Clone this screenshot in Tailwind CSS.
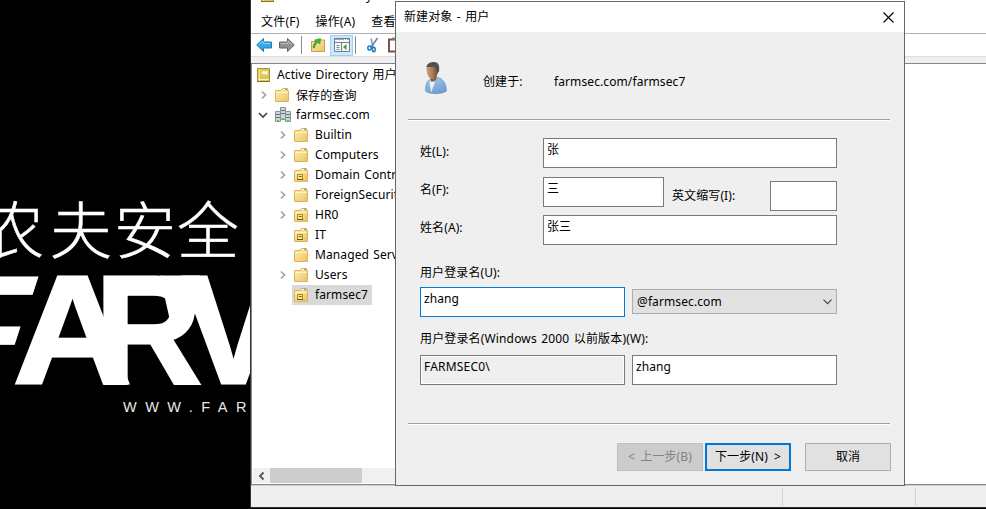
<!DOCTYPE html>
<html lang="zh-CN">
<head>
<meta charset="utf-8">
<title>新建对象 - 用户</title>
<script src="https://cdn.jsdelivr.net/npm/@tailwindcss/browser@4"></script>
</head>
<body class="w-[986px] h-[509px] overflow-hidden bg-black text-black text-[12px] leading-[20px] tracking-[0.1px] font-['Noto_Sans','Noto_Sans_CJK_SC',sans-serif] whitespace-nowrap">
<svg class="absolute" width="0" height="0">
  <defs><linearGradient id="gold" x1="0" y1="0" x2="1" y2="1"><stop offset="0" stop-color="#fff0b0"/><stop offset="1" stop-color="#ecc266"/></linearGradient></defs>
  <symbol id="folder" viewBox="0 0 16 16">
    <path d="M1.500 3.500H7L8.500 1.500H13.500V3.500H14.500V14.500H1.500Z" fill="url(#gold)" stroke="#dcb25c"/>
    <path d="M9 2.500H13" stroke="#fff"/><path d="M11 2.500h2" stroke="#5a9bd0"/>
    <path d="M2 5.500H14" stroke="#fff3c4"/>
  </symbol>
  <symbol id="ou" viewBox="0 0 16 16">
    <use href="#folder"/>
    <path d="M4.500 7.500h5v5h-5z" fill="#fbe38a" stroke="#a48a33"/><path d="M6 9.500h2.500M4 12.500h6" stroke="#6e5914"/>
  </symbol>
  <symbol id="chev" viewBox="0 0 8 10"><path d="M2 1.500L5.500 5L2 8.500" fill="none" stroke="#a3a3a3" stroke-width="1.700"/></symbol>
  <symbol id="book" viewBox="0 0 14 16">
    <path d="M.500 1.500H12.500V14.500H.500Z" fill="#dec65a" stroke="#ab9136"/><path d="M2.500 2V14" stroke="#f5e59a"/><path d="M5 4.500h5.500v2.500h-5.500z" fill="#fffbe6" stroke="#f5e9b0"/><path d="M1 12.500h11" stroke="#fff3bd"/><path d="M0 14.500h13" stroke="#8a701a"/>
  </symbol>
</svg>

<div class="relative flex w-[986px] h-[509px]">
  <!-- Desktop wallpaper -->
  <div class="w-[250px] h-full shrink-0 overflow-hidden">
    <svg width="250" height="509" viewBox="0 0 250 509" fill="#fff" letter-spacing="0">
      <g font-family="Noto Sans CJK SC, sans-serif" font-size="62" font-weight="300" stroke="#fff" stroke-width="0.500">
        <text x="-18" y="254">农</text><text x="50" y="254">夫</text><text x="114" y="254">安</text><text x="177" y="254">全</text>
      </g>
      <g font-family="Liberation Sans, sans-serif" font-weight="700" font-size="154" stroke="#fff" stroke-width="3">
        <text transform="translate(-85 382.500) skewX(-18)" stroke-width="1">F</text>
        <text transform="translate(13 382.500) scale(1.070 1)">A</text>
        <text transform="translate(95 382.500) scale(.960 1)">R</text>
        <text transform="translate(182 382.500)">V</text>
      </g>
      <path d="M160 275.500H200L197 308Q190 326 172 330Z"/>
      <text x="123" y="412" font-family="Liberation Sans, sans-serif" font-size="14.500" letter-spacing="8.500" fill="#e8e8e8">WWW.FAR</text>
    </svg>
  </div>

  <!-- Directory console -->
  <div class="flex flex-col w-[736px] h-[508px] border-l border-b border-[#333238] bg-white overflow-hidden">
    <div class="h-[11px] shrink-0 flex overflow-hidden">
      <svg class="-mt-[13px] ml-[10px]" width="14" height="16"><use href="#book"/></svg>
      <span class="-mt-[14px] ml-[7px]">Active Directory</span>
    </div>
    <div class="h-[22px] shrink-0 flex pl-[10px] gap-[16px] leading-[22px] tracking-[0.2px]"><span>文件(F)</span><span>操作(A)</span><span>查看</span></div>
    <div class="h-[24px] shrink-0 flex items-center border-t border-b border-t-[#b0afb5] border-b-[#dcdcdc] pl-[5px]">
      <svg width="16" height="16"><path d="M.700 8L7.500 1.500V5H15.500V11H7.500V14.500Z" fill="#35a6e6" stroke="#2377b5"/><path d="M2.500 8L7 4V6.500H14.500" stroke="#8cd5fa" fill="none"/></svg>
      <svg class="ml-[7px]" width="16" height="16"><path d="M15.300 8L8.500 1.500V5H.500V11H8.500V14.500Z" fill="#929292" stroke="#646464"/><path d="M1.500 6.500H9V4L13 7.500" stroke="#bdbdbd" fill="none"/></svg>
      <div class="w-px h-[18px] bg-[#8c8c8c] ml-[6px]"></div>
      <svg class="ml-[8px]" width="16" height="16"><path d="M1.500 4.500H8L9.500 3H14.500V14.500H1.500Z" fill="url(#gold)" stroke="#c9a045"/><path d="M3 11C3 7 4.500 5.500 6 4.500L4.500 3L10.500 1.500L10 7L8 5.500C6.500 6.500 5 8 4.500 11Z" fill="#45b52e" stroke="#2d8b20" stroke-width=".500"/></svg>
      <div class="ml-[4px] w-[23px] h-[21px] flex items-center justify-center bg-[#cce8ff] border border-[#99d1ff]">
        <svg width="16" height="16"><path d="M.500 1.500h15v13H.500z" fill="#f8f8f8" stroke="#777d87"/><path d="M1 2.500h14" stroke="#a4aab4"/><path d="M1 5.500h14M7.500 6v8" stroke="#777d87"/><path d="M2.500 8.500h3M2.500 10.500h3M2.500 12.500h3" stroke="#6d8bb4"/><path d="M9 10L12.500 7V13Z" fill="#3ea52e"/><path d="M10 2.500h1M12 2.500h1" stroke="#fff"/></svg>
      </div>
      <div class="w-px h-[18px] bg-[#8c8c8c] ml-[2px]"></div>
      <svg class="ml-[9px]" width="16" height="16" fill="none"><path d="M6 1.500L8 10" stroke="#8297a8" stroke-width="1.500"/><path d="M12.500 1L6 10.500" stroke="#5387b0" stroke-width="1.500"/><ellipse cx="4.500" cy="11" rx="1.700" ry="2" stroke="#1879c4" stroke-width="1.500"/><ellipse cx="8.800" cy="12.500" rx="1.400" ry="2.200" stroke="#1879c4" stroke-width="1.500"/></svg>
      <svg class="ml-[7px]" width="14" height="16"><path d="M1 2.500h11v12H1z" fill="#fff" stroke="#7c5540" stroke-width="2"/><path d="M4 1.500h5" stroke="#888" stroke-width="2"/></svg>
    </div>
    <div class="h-[6px] shrink-0 bg-[#efefef]"></div>
    <div class="h-[422px] shrink-0 flex flex-col border-t border-l border-b border-[#85858f] pt-px">
      <div class="flex-1 flex flex-col">
        <div class="h-[20px] flex items-center pl-[5px]"><svg width="14" height="16"><use href="#book"/></svg><span class="ml-[6px] [word-spacing:1px]">Active Directory 用户</span></div>
        <div class="h-[20px] flex items-center pl-[8px]"><svg width="8" height="10"><use href="#chev"/></svg><svg class="ml-[6px]" width="16" height="16"><use href="#folder"/></svg><span class="ml-[6px] pt-px">保存的查询</span></div>
        <div class="h-[20px] flex items-center pl-[6px]"><svg width="10" height="10"><path d="M1 3L5 7L9 3" fill="none" stroke="#404040" stroke-width="1.600"/></svg>
          <svg class="ml-[7px]" width="16" height="16"><g fill="#d0d6da" stroke="#8a9298"><path d="M5.500 .500h5v12h-5z"/><path d="M.500 4.500h5v10h-5zM10.500 4.500h5v10h-5z"/></g><path d="M6 3.500h4M6 6.500h4M1 7.500h4M1 10.500h4M11 7.500h4M11 10.500h4" stroke="#68727a"/><path d="M2 13h2v2H2zM7 11h2v2H7zM12 13h2v2h-2z" fill="#36dc27"/></svg><span class="ml-[5px]">farmsec.com</span></div>
        <div class="h-[20px] flex items-center pl-[27px]"><svg width="8" height="10"><use href="#chev"/></svg><svg class="ml-[6px]" width="16" height="16"><use href="#folder"/></svg><span class="ml-[6px]">Builtin</span></div>
        <div class="h-[20px] flex items-center pl-[27px]"><svg width="8" height="10"><use href="#chev"/></svg><svg class="ml-[6px]" width="16" height="16"><use href="#folder"/></svg><span class="ml-[6px]">Computers</span></div>
        <div class="h-[20px] flex items-center pl-[27px]"><svg width="8" height="10"><use href="#chev"/></svg><svg class="ml-[6px]" width="16" height="16"><use href="#ou"/></svg><span class="ml-[6px] [word-spacing:1px]">Domain Contr</span></div>
        <div class="h-[20px] flex items-center pl-[27px]"><svg width="8" height="10"><use href="#chev"/></svg><svg class="ml-[6px]" width="16" height="16"><use href="#folder"/></svg><span class="ml-[6px]">ForeignSecurit</span></div>
        <div class="h-[20px] flex items-center pl-[27px]"><svg width="8" height="10"><use href="#chev"/></svg><svg class="ml-[6px]" width="16" height="16"><use href="#ou"/></svg><span class="ml-[6px]">HR0</span></div>
        <div class="h-[20px] flex items-center pl-[41px]"><svg width="16" height="16"><use href="#ou"/></svg><span class="ml-[6px]">IT</span></div>
        <div class="h-[20px] flex items-center pl-[41px]"><svg width="16" height="16"><use href="#folder"/></svg><span class="ml-[6px] [word-spacing:1px]">Managed Serv</span></div>
        <div class="h-[20px] flex items-center pl-[27px]"><svg width="8" height="10"><use href="#chev"/></svg><svg class="ml-[6px]" width="16" height="16"><use href="#folder"/></svg><span class="ml-[6px]">Users</span></div>
        <div class="h-[20px] flex items-center pl-[40px]"><div class="w-[80px] h-[20px] flex items-center bg-[#d9d9d9] pl-px"><svg width="16" height="16"><use href="#ou"/></svg><span class="ml-[6px]">farmsec7</span></div></div>
      </div>
      <div class="h-[15px] w-[200px] ml-px mb-px flex items-center bg-[#f0f0f0]"><svg class="ml-[4px]" width="8" height="10"><path d="M6.500 1.500L3 5L6.500 8.500" fill="none" stroke="#505050" stroke-width="1.800"/></svg><div class="ml-[5px] h-full w-[92px] bg-[#cdcdcd]"></div></div>
    </div>
    <div class="flex-1 flex bg-[#efefef] border-t border-[#d0d0d3] pt-[2px] pb-px"><div class="w-[532px] border-r border-[#d2d2d2]"></div><div class="w-[133px] border-r border-[#d2d2d2]"></div></div>
  </div>

  <!-- New object dialog -->
  <div class="absolute left-[395px] top-[1px] w-[510px] h-[485px] flex flex-col border border-[#65656a] bg-[#efefef]">
    <div class="h-[30px] shrink-0 bg-white flex items-center justify-between pl-[8px] pr-[10px]"><span class="[word-spacing:1.2px]">新建对象 - 用户</span><svg width="11" height="11"><path d="M.500 .500L10.500 10.500M10.500 .500L.500 10.500" stroke="#000" stroke-width="1.100"/></svg></div>
    <div class="h-[87px] shrink-0 mx-[12px] flex">
      <svg class="mt-[29px] ml-[16px]" width="24" height="34" viewBox="0 0 24 34">
        <defs>
          <linearGradient id="skin"><stop offset="0" stop-color="#d6a179"/><stop offset=".5" stop-color="#b07a50"/><stop offset="1" stop-color="#6e462b"/></linearGradient>
          <linearGradient id="coat" x2="0.400" y2="1"><stop offset="0" stop-color="#a9cdef"/><stop offset="1" stop-color="#6f9fd0"/></linearGradient>
        </defs>
        <path d="M1.500 30C1.500 23 3 19.500 7 18L14 16.500C19 18 22 22 22.500 30C18 33.500 5 33.500 1.500 30Z" fill="url(#coat)" stroke="#6a94bb" stroke-width=".700"/>
        <path d="M5.500 20L7 31.500L11 21Z" fill="#eef2f6"/><path d="M6 16L7.500 21L12 19L13 14Z" fill="#8d5c3a"/>
        <path d="M2.500 5C2 13 5 18 8.500 18C12.500 18 14.500 12 14.500 6L9 3Z" fill="url(#skin)"/>
        <path d="M2.500 6C3 2 7 1 10 1C14 1 16 4 15 10.500L13.500 12L11.500 7C9 5 5.500 6.500 2.500 6Z" fill="#505356"/>
      </svg>
      <div class="mt-[40px] ml-[35px] w-[71px]">创建于:</div><div class="mt-[40px]">farmsec.com/farmsec7</div>
    </div>
    <div class="mx-[12px] w-[482px] h-[2px] shrink-0 bg-[#a0a0a0] border-b border-white"></div>
    <div class="w-[417px] ml-[24px] mt-[17px] flex flex-col">
      <div class="h-[39px] flex"><label class="w-[123px] pt-[4px]">姓(L):</label><div class="w-[294px] h-[30px] bg-white border border-[#7a7a7a] pl-[3px] pt-px">张</div></div>
      <div class="h-[38px] flex"><label class="w-[123px] pt-[3px]">名(F):</label><div class="w-[121px] h-[30px] bg-white border border-[#7a7a7a] pl-[3px] pt-px">三</div><label class="ml-[8px] w-[98px] pt-[9px]">英文缩写(I):</label><div class="mt-[4px] w-[67px] h-[30px] bg-white border border-[#7a7a7a]"></div></div>
      <div class="h-[47px] flex"><label class="w-[123px] pt-[3px]">姓名(A):</label><div class="w-[294px] h-[30px] bg-white border border-[#7a7a7a] pl-[3px] pt-px">张三</div></div>
      <label class="h-[25px] pt-px">用户登录名(U):</label>
      <div class="h-[41px] flex gap-[7px]"><div class="w-[205px] h-[30px] bg-white border border-[#0078d7] pl-[3px] pt-px">zhang</div>
        <div class="mt-[2px] w-[205px] h-[25px] bg-[#e1e1e1] border border-[#adadad] flex items-center justify-between pl-[4px] pr-[4px]"><span>@farmsec.com</span><svg width="9" height="6"><path d="M.500 .700L4.500 4.700L8.500 .700" fill="none" stroke="#444" stroke-width="1.200"/></svg></div></div>
      <label class="h-[27px] pt-px tracking-[0.150px] [word-spacing:1.2px]">用户登录名(Windows 2000 以前版本)(W):</label>
      <div class="h-[68px] flex gap-[7px]"><div class="w-[205px] h-[30px] bg-[#efefef] border border-[#7a7a7a] shadow-[inset_0_0_0_1px_#fff] pl-[3px] pt-px tracking-[0.2px]">FARMSEC0\</div><div class="w-[205px] h-[30px] bg-white border border-[#7a7a7a] pl-[3px] pt-px">zhang</div></div>
    </div>
    <div class="mx-[12px] w-[482px] h-[2px] shrink-0 bg-[#a0a0a0] border-b border-white"></div>
    <div class="flex ml-[221px] mt-[18px] leading-[26px] text-center">
      <button class="w-[86px] h-[28px] bg-[#cccccc] border border-[#bfbfbf] text-[#838383] tracking-[0.1px] [word-spacing:2px]">&lt; 上一步(B)</button>
      <button class="ml-[2px] w-[86px] h-[28px] bg-[#e1e1e1] border-2 border-[#0078d7] leading-[24px] tracking-[0.1px] [word-spacing:3px]">下一步(N) &gt;</button>
      <button class="ml-[14px] w-[86px] h-[28px] bg-[#e1e1e1] border border-[#adadad]">取消</button>
    </div>
  </div>
</div>
</body>
</html>
